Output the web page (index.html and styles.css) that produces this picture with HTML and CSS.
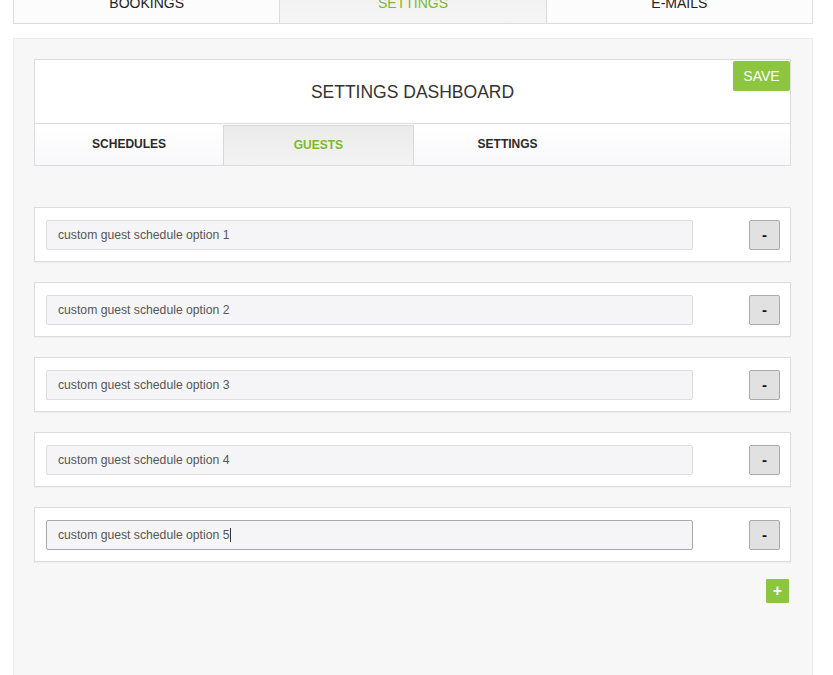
FILE: index.html
```html
<!DOCTYPE html>
<html lang="en">
<head>
  <meta charset="UTF-8">
  <meta name="viewport" content="width=device-width, initial-scale=1.0">
  <title>Settings Dashboard</title>
  <link rel="stylesheet" href="styles.css">
</head>
<body>
  <nav class="main-nav">
    <a class="main-tab">BOOKINGS</a>
    <a class="main-tab active">SETTINGS</a>
    <a class="main-tab">E-MAILS</a>
  </nav>

  <main class="panel">
    <div class="dash-card">
      <div class="dash-title">
        SETTINGS DASHBOARD
        <button class="btn-save">SAVE</button>
      </div>
      <div class="sub-tabs">
        <a class="sub-tab">SCHEDULES</a>
        <a class="sub-tab active">GUESTS</a>
        <a class="sub-tab">SETTINGS</a>
        <span class="sub-tab empty"></span>
      </div>
    </div>

    <div class="option-list">
      <div class="option-row">
        <input type="text" class="option-input" value="custom guest schedule option 1">
        <button class="btn-remove">-</button>
      </div>
      <div class="option-row">
        <input type="text" class="option-input" value="custom guest schedule option 2">
        <button class="btn-remove">-</button>
      </div>
      <div class="option-row">
        <input type="text" class="option-input" value="custom guest schedule option 3">
        <button class="btn-remove">-</button>
      </div>
      <div class="option-row">
        <input type="text" class="option-input" value="custom guest schedule option 4">
        <button class="btn-remove">-</button>
      </div>
      <div class="option-row">
        <div class="option-input focused">custom guest schedule option 5<span class="caret"></span></div>
        <button class="btn-remove">-</button>
      </div>
    </div>

    <div class="add-row">
      <button class="btn-add">+</button>
    </div>
  </main>
</body>
</html>
```

FILE: styles.css
```css
:root {
  --color-green: #8cc63e;
  --color-green-text: #7cb82f;
  --color-border: #dcdcdc;
  --color-text: #333333;
  --color-panel: #f7f7f7;
}

* {
  margin: 0;
  padding: 0;
  box-sizing: border-box;
}

body {
  font-family: 'Liberation Sans', Arial, sans-serif;
  color: var(--color-text);
  background: #ffffff;
  height: 675px;
  overflow: hidden;
}

/* top navigation */
.main-nav {
  display: flex;
  margin: -18px 20px 0 13px;
  border: 1px solid var(--color-border);
  background: #fcfcfc;
}

.main-tab {
  flex: 1;
  height: 40px;
  line-height: 40px;
  text-align: center;
  font-size: 14px;
  color: #222;
  border-left: 1px solid var(--color-border);
}

.main-tab:first-child {
  border-left: none;
}

.main-tab.active {
  color: var(--color-green-text);
  background: linear-gradient(#f0efef, #f6f5f5);
}

/* panel */
.panel {
  margin: 14px 20px 0 13px;
  padding: 20px 21px 0 20px;
  border: 1px solid #ececec;
  border-bottom: none;
  background: var(--color-panel);
  height: 637px;
}

.dash-card {
  border: 1px solid var(--color-border);
  background: #ffffff;
}

.dash-title {
  position: relative;
  height: 64px;
  line-height: 64px;
  text-align: center;
  font-size: 17.5px;
  color: #333;
  border-bottom: 1px solid var(--color-border);
}

.btn-save {
  position: absolute;
  top: 1px;
  right: 0;
  width: 57px;
  height: 30px;
  border: none;
  border-radius: 2px;
  background: var(--color-green);
  color: #ffffff;
  font-family: inherit;
  font-size: 14px;
}

.sub-tabs {
  display: flex;
  height: 41px;
  background: linear-gradient(#ffffff, #f8f8fa);
}

.sub-tab {
  flex: 1;
  line-height: 41px;
  text-align: center;
  font-size: 12px;
  font-weight: bold;
  color: #2a2a2a;
}

.sub-tab.active {
  color: var(--color-green-text);
  background: linear-gradient(#ebebeb, #f3f3f3);
  border: 1px solid #d8d8d8;
  border-bottom: none;
  line-height: 39px;
  margin-top: 1px;
}

/* options */
.option-list {
  display: flex;
  flex-direction: column;
  gap: 20px;
  margin-top: 41px;
}

.option-row {
  display: flex;
  align-items: center;
  justify-content: space-between;
  height: 55px;
  padding: 0 10px 0 11px;
  border: 1px solid var(--color-border);
  background: #ffffff;
  box-shadow: 0 1px 1px rgba(0, 0, 0, 0.03);
}

.option-input {
  width: 647px;
  height: 30px;
  padding: 0 11px;
  border: 1px solid #dddddd;
  border-radius: 2px;
  background: #f5f5f7;
  font-family: inherit;
  font-size: 12.2px;
  line-height: 28px;
  color: #555555;
}

.option-input.focused {
  border-color: #a8a8a8;
}

.caret {
  display: inline-block;
  width: 1px;
  height: 14px;
  margin-left: 1px;
  vertical-align: -3px;
  background: #333;
}

.btn-remove {
  width: 31px;
  height: 30px;
  border: 1px solid #aaaaaa;
  border-radius: 2px;
  background: #e1e1e1;
  color: #111;
  font-family: inherit;
  font-size: 15px;
  font-weight: bold;
}

.add-row {
  display: flex;
  justify-content: flex-end;
  margin-top: 17px;
  padding-right: 2px;
}

.btn-add {
  width: 23px;
  height: 24px;
  border: none;
  border-radius: 1px;
  background: var(--color-green);
  color: #ffffff;
  font-family: inherit;
  font-size: 16px;
  font-weight: bold;
  line-height: 24px;
}
```
